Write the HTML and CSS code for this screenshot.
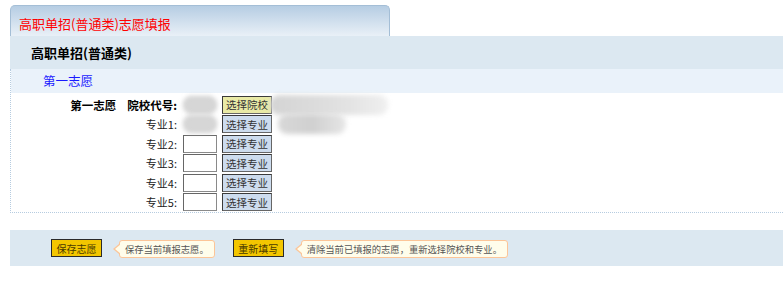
FILE: index.html
```html
<!DOCTYPE html>
<html lang="zh-CN">
<head>
  <meta charset="UTF-8">
  <title>高职单招(普通类)志愿填报</title>
  <link rel="stylesheet" href="styles.css">
</head>
<body>

  <div class="wrap">
    <div class="tab">高职单招(普通类)志愿填报</div>
    <div class="head">高职单招(普通类)</div>

    <div class="panel">
      <div class="sub">第一志愿</div>
      <div class="form">
        <div class="row">
          <span class="lbl strong">第一志愿<span class="gap"></span>院校代号:</span>
          <input type="text" class="code masked">
          <button class="pick school">选择院校</button>
          <span class="mosaic wide"></span>
        </div>
        <div class="row">
          <span class="lbl">专业1:</span>
          <input type="text" class="code masked">
          <button class="pick">选择专业</button>
          <span class="mosaic short"></span>
        </div>
        <div class="row">
          <span class="lbl">专业2:</span>
          <input type="text" class="code">
          <button class="pick">选择专业</button>
        </div>
        <div class="row">
          <span class="lbl">专业3:</span>
          <input type="text" class="code">
          <button class="pick">选择专业</button>
        </div>
        <div class="row">
          <span class="lbl">专业4:</span>
          <input type="text" class="code">
          <button class="pick">选择专业</button>
        </div>
        <div class="row">
          <span class="lbl">专业5:</span>
          <input type="text" class="code">
          <button class="pick">选择专业</button>
        </div>
      </div>
    </div>

    <div class="actions">
      <button class="act">保存志愿</button>
      <span class="tip">保存当前填报志愿。</span>
      <button class="act">重新填写</button>
      <span class="tip">清除当前已填报的志愿，重新选择院校和专业。</span>
    </div>
  </div>

</body>
</html>
```

FILE: styles.css
```css
body {
  margin: 0;
  font-family: "Noto Sans CJK SC", "Liberation Sans", sans-serif;
  background: #fff;
  color: #000;
}
.wrap {
  padding: 5px 0 0 10px;
}
.tab {
  box-sizing: border-box;
  width: 380px;
  height: 31px;
  padding: 8px 0 0 8px;
  line-height: 20px;
  font-size: 13px;
  color: #ff0000;
  border: 1px solid #a4bed6;
  border-bottom: none;
  border-radius: 5px 5px 0 0;
  background: linear-gradient(#b6cde3, #e9f0f7);
}
.head {
  height: 33px;
  line-height: 33px;
  padding-left: 21px;
  font-size: 13px;
  font-weight: bold;
  background: #dce8f1;
}
.panel {
  border-left: 1px dotted #b6cce0;
  border-bottom: 1px dotted #b6cce0;
}
.sub {
  height: 24px;
  line-height: 24px;
  padding-left: 32px;
  font-size: 12.5px;
  color: #1a1aff;
  background: #eaf2fa;
}
.form {
  padding-top: 2px;
}
.row {
  display: flex;
  align-items: center;
  height: 19.5px;
  font-size: 11px;
}
.lbl {
  width: 166px;
  text-align: right;
  color: #222;
}
.strong {
  font-size: 11.5px;
  font-weight: bold;
  color: #000;
}
.gap {
  display: inline-block;
  width: 11px;
}
.code {
  box-sizing: border-box;
  width: 34px;
  height: 18px;
  margin: 0 0 0 6px;
  padding: 0;
  border: 1px solid #8a8a8a;
  border-top-color: #666;
  border-left-color: #666;
  background: #fff;
}
.masked {
  background: #d6d6d6;
  border-color: #c8c8c8;
  border-radius: 8px;
  filter: blur(2px);
}
.pick {
  box-sizing: border-box;
  width: 50px;
  height: 18px;
  margin-left: 5px;
  padding: 0;
  font-family: inherit;
  font-size: 10.5px;
  color: #333;
  border: 1px solid #3a3a3a;
  border-right-color: #666;
  border-bottom-color: #666;
  background: #cddcee;
}
.pick.school {
  background: #e9eaa6;
}
.mosaic {
  height: 20px;
  border-radius: 9px;
  filter: blur(2.5px);
}
.mosaic.wide {
  width: 118px;
  margin-left: -2px;
  background: linear-gradient(90deg, #d4d4d4, #dcdcdc 40%, #e4e4e4 70%, #f0f0f0);
}
.mosaic.short {
  width: 68px;
  margin-left: 6px;
  background: linear-gradient(90deg, #d8d8d8, #d0d0d0 50%, #e6e6e6);
}
.actions {
  display: flex;
  align-items: center;
  height: 36px;
  margin-top: 17px;
  padding-left: 41px;
  background: #dce8f1;
}
.act {
  box-sizing: border-box;
  width: 51px;
  height: 18px;
  padding: 0;
  font-family: inherit;
  font-size: 10px;
  color: #4a3a00;
  border: 1px solid #2a2a2a;
  background: #f3c600;
}
.tip {
  position: relative;
  box-sizing: border-box;
  height: 18px;
  line-height: 16px;
  margin: 1px 18px 0 17px;
  padding: 0 5px;
  font-size: 9.3px;
  color: #555;
  border: 1px solid #fcc598;
  border-radius: 3px;
  background: #fffdeb;
}
.tip::before,
.tip::after {
  content: "";
  position: absolute;
  top: 3px;
  border: 5px solid transparent;
  border-left: none;
}
.tip::before {
  left: -7px;
  border-right: 6px solid #fcc598;
}
.tip::after {
  left: -5px;
  border-right: 6px solid #fffdeb;
}
```
